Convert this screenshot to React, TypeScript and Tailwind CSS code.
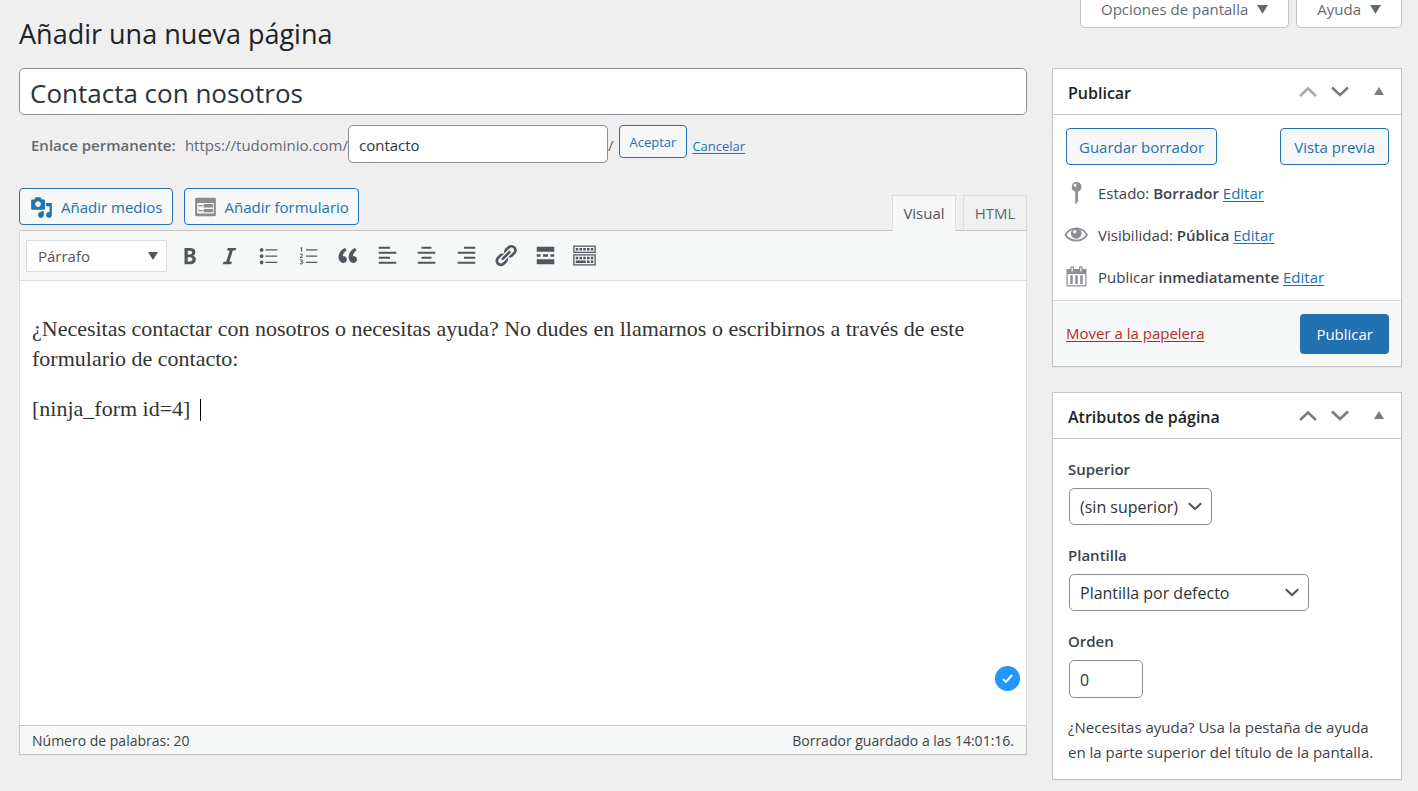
import type { ReactNode } from "react";

const paths = {
  bold: "M6 4v13h4.54c1.37 0 2.46-.33 3.26-1 .8-.66 1.2-1.58 1.2-2.77 0-.84-.17-1.51-.51-2.01s-.9-.85-1.67-1.03v-.09c.57-.1 1.02-.4 1.36-.9s.51-1.13.51-1.91c0-1.14-.39-1.98-1.17-2.5C12.75 4.26 11.5 4 9.78 4H6zm2.57 5.15V6.26h1.36c.73 0 1.27.11 1.61.32.34.22.51.58.51 1.07 0 .54-.16.92-.47 1.15s-.82.35-1.51.35h-1.5zm0 2.19h1.6c1.44 0 2.16.53 2.16 1.61 0 .6-.17 1.05-.51 1.34s-.86.43-1.57.43H8.57v-3.38z",
  italic: "M14.78 6h-2.13l-2.8 9h2.12l-.62 2H4.6l.62-2h2.14l2.8-9H8.03l.62-2h6.75z",
  bullets:
    "M4.5 7C3.67 7 3 6.33 3 5.5 3 4.68 3.67 4 4.5 4 5.32 4 6 4.68 6 5.5 6 6.33 5.32 7 4.5 7zM7.5 5H17v1H7.5V5zm-3 7c-.83 0-1.5-.67-1.5-1.5C3 9.68 3.67 9 4.5 9c.82 0 1.5.68 1.5 1.5 0 .83-.68 1.5-1.5 1.5zM7.5 10H17v1H7.5v-1zm-3 7c-.83 0-1.5-.67-1.5-1.5 0-.82.67-1.5 1.5-1.5.82 0 1.5.68 1.5 1.5 0 .83-.68 1.5-1.5 1.5zM7.5 15H17v1H7.5v-1z",
  numbers: "M8 5h9v1H8V5zm0 5h9v1H8v-1zm0 5h9v1H8v-1z",
  quote:
    "M9.49 13.22c0-.74-.2-1.38-.61-1.9-.62-.78-1.83-.88-2.53-.72-.29-1.65 1.11-3.75 2.92-4.65L7.88 4c-2.73 1.3-5.42 4.28-4.96 8.05C3.21 14.43 4.59 16 6.54 16c.85 0 1.56-.25 2.12-.75s.83-1.18.83-2.03zm8.05 0c0-.74-.2-1.38-.61-1.9-.63-.78-1.83-.88-2.53-.72-.29-1.65 1.11-3.75 2.92-4.65L15.93 4c-2.73 1.3-5.41 4.28-4.95 8.05.29 2.38 1.66 3.95 3.61 3.95.85 0 1.56-.25 2.12-.75s.83-1.18.83-2.03z",
  left: "M12 4.6V3H3v1.6h9zM17 8.6V7H3v1.6h14zM12 12.6V11H3v1.6h9zM17 16.6V15H3v1.6h14z",
  center: "M14 4.6V3H6v1.6h8zM17 8.6V7H3v1.6h14zM14 12.6V11H6v1.6h8zM17 16.6V15H3v1.6h14z",
  right: "M17 4.6V3H8v1.6h9zM17 8.6V7H3v1.6h14zM17 12.6V11H8v1.6h9zM17 16.6V15H3v1.6h14z",
  link: "M17.74 2.76c1.68 1.69 1.68 4.41 0 6.1l-1.53 1.52c-1.12 1.12-2.7 1.47-4.14 1.09l2.62-2.61.76-.77.76-.76c.84-.84.84-2.2 0-3.04-.84-.85-2.2-.85-3.04 0l-.77.76-3.38 3.38c-.37-1.44-.02-3.02 1.1-4.14l1.52-1.53c1.69-1.68 4.42-1.68 6.1 0zM8.59 13.43l5.34-5.34c.42-.42.42-1.1 0-1.52-.44-.43-1.13-.39-1.53 0l-5.33 5.34c-.42.42-.42 1.1 0 1.52.44.43 1.13.39 1.52 0zm-.76 2.29l4.14-4.15c.38 1.44.03 3.02-1.09 4.14l-1.52 1.53c-1.69 1.68-4.41 1.68-6.1 0-1.68-1.68-1.68-4.42 0-6.1l1.53-1.52c1.12-1.12 2.7-1.47 4.14-1.1l-4.14 4.15c-.85.84-.85 2.2 0 3.05.84.84 2.2.84 3.04 0z",
  more: "M17 7V3H3v4h14zM6 11V9H3v2h3zm6 0V9H8v2h4zm5 0V9h-3v2h3zm0 6v-4H3v4h14z",
  sink: "M19 2v6H1V2h18zm-1 5V3H2v4h16zM5 4v2H3V4h2zm3 0v2H6V4h2zm3 0v2H9V4h2zm3 0v2h-2V4h2zm3 0v2h-2V4h2zm2 5v9H1V9h18zm-1 8v-7H2v7h16zM5 11v2H3v-2h2zm3 0v2H6v-2h2zm3 0v2H9v-2h2zm3 0v2h-2v-2h2zm3 0v2h-2v-2h2zm-6 3v2H3v-2h8zm3 0v2h-2v-2h2zm3 0v2h-2v-2h2z",
  media:
    "M13 11V4c0-.55-.45-1-1-1h-1.67L9 1H5L3.67 3H2c-.55 0-1 .45-1 1v7c0 .55.45 1 1 1h10c.55 0 1-.45 1-1zM7 4.5c1.38 0 2.5 1.12 2.5 2.5S8.38 9.5 7 9.5 4.5 8.38 4.5 7 5.62 4.5 7 4.5zM14 6h5v10.5c0 1.38-1.12 2.5-2.5 2.5S14 17.88 14 16.5s1.12-2.5 2.5-2.5c.17 0 .34.02.5.05V9h-3V6zm-4 8.05V13h2v3.5c0 1.38-1.12 2.5-2.5 2.5S7 17.88 7 16.5 8.12 14 9.5 14c.17 0 .34.02.5.05z",
  form: "M2 1.500h16c.6 0 1 .4 1 1v14c0 .6-.4 1-1 1H2c-.6 0-1-.4-1-1v-14c0-.6.4-1 1-1zM2.800 6v9.200h14.400V6H2.800zM3.800 7.900H7.500v1H3.800zM8.300 7H16.400v3H8.300zM3.800 12.200H7.500v1H3.800zM8.300 11.200H16.400v3H8.300z",
  pin: "M10 1.500a4 4 0 0 1 1.200 7.800V16.500l-1.200 2.500h-1V9.300A4 4 0 0 1 10 1.500zM8.900 3a1.200 1.200 0 1 0 0 2.400 1.200 1.200 0 0 0 0-2.400z",
  eye: "M18.800 10.400C16.800 7.100 13.500 4.900 9.800 4.900S2.800 7.100.6 10.400c2.200 3.300 5.500 5.300 9.200 5.300s7-2 9-5.300zM9.800 14.600c-3 0-5.700-1.500-7.500-4.200 1-1.600 2.300-2.800 3.900-3.500a4.300 4.300 0 1 0 7.200 0c1.600.7 2.800 1.900 3.800 3.500-1.700 2.700-4.400 4.200-7.400 4.200zM9.800 4.900a4.300 4.300 0 0 1 4.300 4.300 4.300 4.300 0 0 1-8.600 0A4.300 4.300 0 0 1 9.800 4.900zM8.700 6.600a1.300 1.300 0 1 0 0 2.600 1.300 1.300 0 0 0 0-2.600z",
  calendar:
    "M15 4h3v14H2V4h3V3c0-.83.67-1.5 1.5-1.5S8 2.17 8 3v1h4V3c0-.83.67-1.5 1.5-1.5S15 2.17 15 3v1zM6 3v2.5c0 .28.22.5.5.5s.5-.22.5-.5V3c0-.28-.22-.5-.5-.5S6 2.72 6 3zm7 0v2.5c0 .28.22.5.5.5s.5-.22.5-.5V3c0-.28-.22-.5-.5-.5s-.5.22-.5.5zm4 14V8H3v9h14zM7 16V9H5v7h2zm4 0V9H9v7h2zm4 0V9h-2v7h2z",
};

type IconName = keyof typeof paths;

function Icon({ name, className = "size-[25px]" }: { name: IconName; className?: string }) {
  return (
    <svg viewBox="0 0 20 20" fill="currentColor" fillRule={name === "eye" ? "nonzero" : "evenodd"} className={className} aria-hidden="true">
      {name === "eye" ? (
        <>
          <path d="M1.200 10.200C3 7 6.200 5.100 9.800 5.100s6.800 1.900 8.600 5.100c-1.800 3.100-5 4.700-8.600 4.700s-6.800-1.600-8.600-4.700z" fill="none" stroke="currentColor" strokeWidth="1.400" />
          <circle cx="9.800" cy="9" r="4.300" />
          <circle cx="8.600" cy="7.700" r="1.300" fill="#fff" />
        </>
      ) : (
        <path d={paths[name]} />
      )}
      {name === "numbers" && (
        <path
          d="M3.400 4.200l1.100-.7V7M3.200 9.300c.6-.7 2-.6 2 .2 0 .6-1 1.200-1.900 2h2.200M3.200 13.700c1-.4 2.100-.2 2.100.5 0 .5-.5.800-1.300.8.900 0 1.500.300 1.500.9 0 .8-1.300 1.100-2.300.6"
          fill="none"
          stroke="currentColor"
          strokeWidth=".8"
        />
      )}
    </svg>
  );
}

function Caret({ up = false, className = "w-[10px]" }: { up?: boolean; className?: string }) {
  return (
    <svg viewBox="0 0 10 8" fill="currentColor" className={className} aria-hidden="true">
      <path d={up ? "M5 0l5 8H0z" : "M0 0h10L5 8z"} />
    </svg>
  );
}

function Chevron({ up = false, className }: { up?: boolean; className: string }) {
  return (
    <svg viewBox="0 0 18 12" fill="none" stroke="currentColor" strokeWidth="2.600" className={className} aria-hidden="true">
      <path d={up ? "M1 10l8-7.500 8 7.500" : "M1 1.500l8 7.500 8-7.500"} />
    </svg>
  );
}

const tools: [IconName, string][] = [
  ["bold", "Negrita"],
  ["italic", "Cursiva"],
  ["bullets", "Lista con viñetas"],
  ["numbers", "Lista numerada"],
  ["quote", "Cita"],
  ["left", "Alinear a la izquierda"],
  ["center", "Centrar"],
  ["right", "Alinear a la derecha"],
  ["link", "Insertar enlace"],
  ["more", "Insertar etiqueta Leer más"],
  ["sink", "Alternar la barra de herramientas"],
];

const outline = "flex items-center justify-center rounded-[4px] border border-[#2271b1] bg-[#f6f7f7] pt-[2px] text-[#2271b1]";
const link = "text-[#2271b1] underline underline-offset-2";
const field = "rounded-[5px] border border-[#8c8f94] bg-white pt-[2px] text-[#2c3338]";
const screenTab = "flex h-[28px] items-center gap-[9px] rounded-b-[5px] border border-t-0 border-[#c3c4c7] bg-white px-[20px] pb-[8px]";

function Panel({ title, first = false, children }: { title: string; first?: boolean; children: ReactNode }) {
  return (
    <section className="border border-[#c3c4c7] bg-white shadow-[0_1px_1px_rgba(0,0,0,0.04)]">
      <header className="flex h-[46px] items-center border-b border-[#c3c4c7] pr-[17px] pl-[15px] text-[#787c82]">
        <h2 className="flex-1 pt-[3px] text-[16px] font-semibold text-[#1d2327]">{title}</h2>
        <button type="button" aria-label="Mover hacia arriba" disabled={first} className="disabled:text-[#a7aaad]">
          <Chevron up className="w-[18px]" />
        </button>
        <button type="button" aria-label="Mover hacia abajo" className="ml-[14px]">
          <Chevron className="w-[18px]" />
        </button>
        <button type="button" aria-label="Alternar panel" className="ml-[25px] pb-[2px]">
          <Caret up />
        </button>
      </header>
      {children}
    </section>
  );
}

function Status({ icon, label, value }: { icon: IconName; label: string; value: string }) {
  return (
    <div className="flex h-[42px] items-center gap-[9px] pl-[11px]">
      <span className="pb-[2px] text-[#8c8f94]">
        <Icon name={icon} />
      </span>
      <p>
        {label} <strong className="font-semibold">{value}</strong>{" "}
        <a href="#editar" className={link}>
          Editar
        </a>
      </p>
    </div>
  );
}

function Dropdown({ id, label, option, className }: { id: string; label: string; option: string; className: string }) {
  return (
    <div>
      <label htmlFor={id} className="block h-[29px] leading-[21px] font-semibold">
        {label}
      </label>
      <div className={`ml-px grid items-center ${className}`}>
        <select id={id} className={`${field} col-start-1 row-start-1 h-[37px] w-full appearance-none pl-[10px] text-[16px]`}>
          <option>{option}</option>
        </select>
        <Chevron className="pointer-events-none col-start-1 row-start-1 mr-[10px] w-[14px] justify-self-end text-[#50575e]" />
      </div>
    </div>
  );
}

export default function App() {
  return (
    <div className="min-h-screen bg-[#efefef] pr-4 pl-[19px] font-['Open_Sans','Noto_Sans',sans-serif] text-[15px] leading-[25px] text-[#3c434a]">
      <header className="flex h-[68px] items-start justify-between">
        <h1 className="pt-[16px] text-[27px] leading-[36px] text-[#1d2327]">Añadir una nueva página</h1>
        <div className="flex gap-[7px] text-[#646970]">
          <button type="button" className={screenTab}>
            Opciones de pantalla <Caret className="w-[11px]" />
          </button>
          <button type="button" className={screenTab}>
            Ayuda <Caret className="w-[11px]" />
          </button>
        </div>
      </header>

      <div className="flex items-start gap-[25px] pb-[11px]">
        <main className="min-w-0 flex-1">
          <input aria-label="Título" defaultValue="Contacta con nosotros" className={`${field} block h-[47px] w-full px-[10px] text-[26px]`} />

          <div className="flex h-[73px] items-start pt-[10px] pl-[12px] text-[#646970]">
            <label htmlFor="slug" className="flex w-[317px] justify-between pt-[8px]">
              <strong className="font-semibold">Enlace permanente:</strong>
              <span>https://tudominio.com/</span>
            </label>
            <input id="slug" defaultValue="contacto" className={`${field} h-[38px] w-[260px] px-[10px]`} />
            <span className="pt-[8px]">/</span>
            <button type="button" className={`${outline} ml-[5px] h-[33px] px-[10px] text-[13px]`}>
              Aceptar
            </button>
            <a href="#cancelar" className={`${link} ml-[5px] pt-[9px] text-[13px]`}>
              Cancelar
            </a>
          </div>

          <div className="flex h-[42px] items-start justify-between">
            <div className="flex gap-[11px]">
              <button type="button" className={`${outline} h-[37px] gap-[8px] px-[10px]`}>
                <Icon name="media" className="size-[23px]" />
                Añadir medios
              </button>
              <button type="button" className={`${outline} h-[37px] gap-[7px] px-[9px]`}>
                <span className="text-[#8c8c8c]">
                  <Icon name="form" className="size-[23px]" />
                </span>
                Añadir formulario
              </button>
            </div>
            <div className="z-10 flex gap-[7px] self-end">
              <button type="button" className="-mb-px h-[36px] w-[64px] border border-b-0 border-[#dcdcde] bg-[#f6f7f7] text-[#50575e]">
                Visual
              </button>
              <button type="button" className="h-[35px] w-[64px] border border-b-0 border-[#dcdcde] bg-[#f0f0f1] text-[#646970]">
                HTML
              </button>
            </div>
          </div>

          <section className="border border-[#dcdcde] border-t-[#c3c4c7] bg-white shadow-[0_1px_1px_rgba(0,0,0,0.04)]">
            <div className="flex h-[50px] items-center border-b border-[#dcdcde] bg-[#f6f7f7] pl-[6px] text-[#50575e]">
              <div className="grid w-[141px] items-center">
                <select aria-label="Formato de párrafo" className="col-start-1 row-start-1 h-[32px] appearance-none border border-[#dcdcde] bg-white pt-[2px] pl-[11px] text-[15px]">
                  <option>Párrafo</option>
                </select>
                <Caret className="pointer-events-none col-start-1 row-start-1 mr-[9px] w-[10px] justify-self-end" />
              </div>
              <div className="ml-[10px] flex w-[420px] justify-between">
                {tools.map(([name, label]) => (
                  <button key={name} type="button" aria-label={label}>
                    <Icon name={name} />
                  </button>
                ))}
              </div>
            </div>

            <div className="relative min-h-[444px]">
              <div
                role="textbox"
                aria-label="Contenido"
                contentEditable
                suppressContentEditableWarning
                className="px-[12px] pt-[33px] font-['Liberation_Serif',serif] text-[22px] leading-[30px] text-[#333333] outline-none"
              >
                <p className="mb-[20px]">
                  ¿Necesitas contactar con nosotros o necesitas ayuda? No dudes en llamarnos o escribirnos a través de este formulario de contacto:
                </p>
                <p>
                  [ninja_form id=4] <span className="ml-1 inline-block h-[22px] w-px bg-black align-[-5px]" />
                </p>
              </div>
              <span className="absolute right-[6px] bottom-[34px] flex size-[25px] items-center justify-center rounded-full bg-[#2196fb]">
                <svg viewBox="0 0 12 12" fill="none" stroke="#fff" strokeWidth="2.200" className="w-[11px]" aria-hidden="true">
                  <path d="M1 6.500l3.300 3.200L11 2.200" />
                </svg>
              </span>
            </div>

            <footer className="-mx-px -mb-px flex h-[30px] items-center justify-between border border-[#c3c4c7] bg-[#f6f7f7] px-[12px] text-[14px]">
              <span>Número de palabras: 20</span>
              <span>Borrador guardado a las 14:01:16.</span>
            </footer>
          </section>
        </main>

        <aside className="flex w-[350px] shrink-0 flex-col gap-[25px]">
          <Panel title="Publicar" first>
            <div className="flex justify-between pt-[13px] pr-[12px] pl-[13px]">
              <button type="button" className={`${outline} h-[37px] px-[12px]`}>
                Guardar borrador
              </button>
              <button type="button" className={`${outline} h-[37px] px-[13px]`}>
                Vista previa
              </button>
            </div>
            <div className="pt-[7px] pb-[2px]">
              <Status icon="pin" label="Estado:" value="Borrador" />
              <Status icon="eye" label="Visibilidad:" value="Pública" />
              <Status icon="calendar" label="Publicar" value="inmediatamente" />
            </div>
            <div className="flex h-[66px] items-center justify-between border-t border-[#dcdcde] bg-[#f6f7f7] pr-[12px] pl-[13px]">
              <a href="#papelera" className="text-[#b32d2e] underline underline-offset-2">
                Mover a la papelera
              </a>
              <button type="button" className="h-[40px] rounded-[4px] bg-[#2271b1] px-4 pt-[2px] text-white">
                Publicar
              </button>
            </div>
          </Panel>

          <Panel title="Atributos de página">
            <div className="flex flex-col gap-[20px] px-[15px] pt-[20px] pb-[14px]">
              <Dropdown id="superior" label="Superior" option="(sin superior)" className="w-[143px]" />
              <Dropdown id="plantilla" label="Plantilla" option="Plantilla por defecto" className="w-[240px]" />
              <div>
                <label htmlFor="orden" className="block h-[29px] leading-[21px] font-semibold">
                  Orden
                </label>
                <input id="orden" defaultValue="0" className={`${field} ml-px block h-[38px] w-[74px] px-[10px] text-[16px]`} />
              </div>
              <p className="-mt-[3px]">¿Necesitas ayuda? Usa la pestaña de ayuda en la parte superior del título de la pantalla.</p>
            </div>
          </Panel>
        </aside>
      </div>
    </div>
  );
}
